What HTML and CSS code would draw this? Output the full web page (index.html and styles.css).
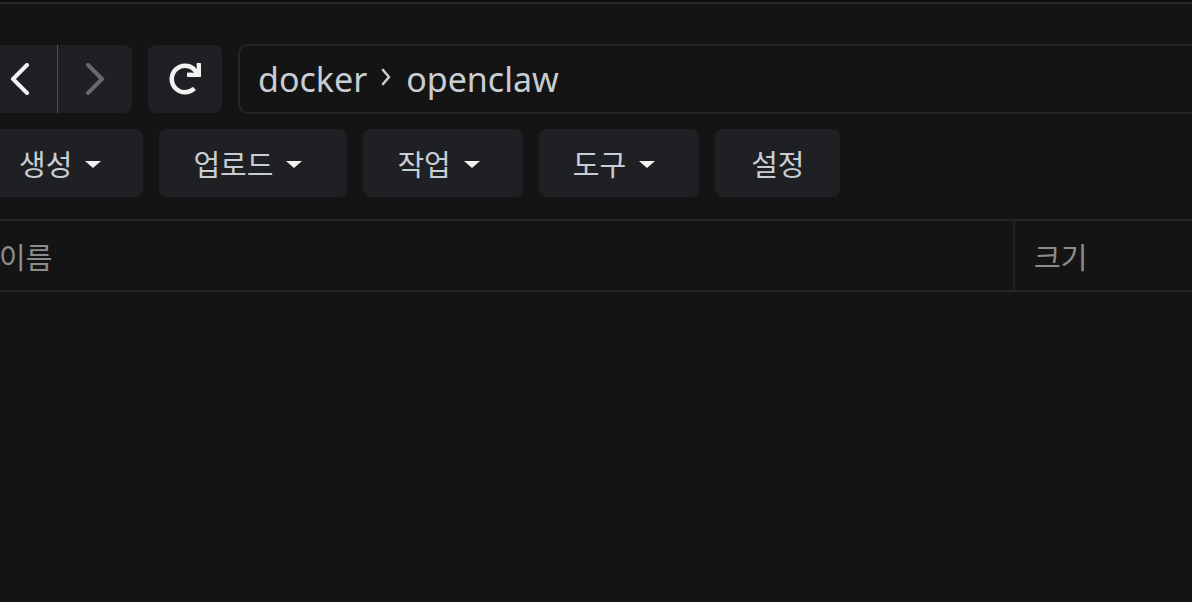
FILE: index.html
```html
<!DOCTYPE html>
<html lang="ko">
<head>
    <meta charset="UTF-8">
    <meta name="viewport" content="width=device-width, initial-scale=1.0">
    <title>파일 탐색기</title>
    <link rel="stylesheet" href="styles.css">
</head>
<body>
    <div class="top-strip"></div>

    <div class="app">
        <div class="nav-row">
            <div class="nav-group">
                <button class="nav-btn" title="뒤로">
                    <svg width="20" height="32" viewBox="0 0 20 32"><polyline points="17,2 3,16 17,30" fill="none" stroke="#f2f2f2" stroke-width="4" stroke-linecap="round" stroke-linejoin="round"/></svg>
                </button>
                <div class="nav-divider"></div>
                <button class="nav-btn" title="앞으로">
                    <svg width="20" height="32" viewBox="0 0 20 32"><polyline points="3,2 17,16 3,30" fill="none" stroke="#696969" stroke-width="4" stroke-linecap="round" stroke-linejoin="round"/></svg>
                </button>
            </div>
            <button class="refresh-btn" title="새로고침">
                <svg width="32" height="32" viewBox="0 0 512 512"><path fill="#f2f2f2" d="M500.33 0h-47.41a12 12 0 0 0-12 12.57l4 82.76A247.42 247.42 0 0 0 256 8C119.34 8 7.9 119.53 8 256.19 8.1 393.07 119.1 504 256 504a247.1 247.1 0 0 0 166.18-63.91 12 12 0 0 0 .48-17.43l-34-34a12 12 0 0 0-16.38-.55A176 176 0 1 1 402.1 157.8l-101.53-4.87a12 12 0 0 0-12.57 12v47.41a12 12 0 0 0 12 12h200.33a12 12 0 0 0 12-12V12a12 12 0 0 0-12-12z"/></svg>
            </button>
            <div class="path-box">
                <span class="crumb">docker</span>
                <svg class="crumb-sep" width="10" height="18" viewBox="0 0 10 18"><polyline points="2,2 8,9 2,16" fill="none" stroke="#c8ccd3" stroke-width="2.6" stroke-linecap="round" stroke-linejoin="round"/></svg>
                <span class="crumb">openclaw</span>
            </div>
        </div>

        <div class="tool-row">
            <button class="tool-btn first">생성 <span class="caret"></span></button>
            <button class="tool-btn">업로드 <span class="caret"></span></button>
            <button class="tool-btn tight">작업 <span class="caret"></span></button>
            <button class="tool-btn snug">도구 <span class="caret"></span></button>
            <button class="tool-btn plain">설정</button>
        </div>

        <div class="list-header">
            <div class="col-name">이름</div>
            <div class="col-size">크기</div>
        </div>
    </div>
</body>
</html>
```

FILE: styles.css
```css
body {
    margin: 0;
    padding: 0;
    background-color: #141414;
    height: 100vh;
    overflow: hidden;
    font-family: "Noto Sans", "Noto Sans CJK KR", sans-serif;
}

.top-strip {
    height: 2px;
    background: #0f0f0f;
    border-bottom: 2px solid #262626;
}

.app {
    margin-left: -17px;
}

.nav-row {
    display: flex;
    align-items: center;
    gap: 16px;
    margin-top: 40px;
    height: 70px;
}

.nav-group {
    display: flex;
    height: 68px;
    background: #1e2023;
    border-radius: 8px;
}

.nav-btn,
.refresh-btn,
.tool-btn {
    border: none;
    background: #1e2023;
    cursor: pointer;
    display: flex;
    align-items: center;
    justify-content: center;
    padding: 0;
}

.nav-btn {
    width: 74px;
    height: 68px;
    background: transparent;
}

.nav-divider {
    width: 1px;
    background: #505050;
}

.refresh-btn {
    width: 74px;
    height: 68px;
    border-radius: 8px;
}

.path-box {
    flex: 1;
    height: 66px;
    margin-right: -40px;
    border: 2px solid #262626;
    border-radius: 10px;
    display: flex;
    align-items: center;
    padding-left: 18px;
    color: #c8ccd3;
    font-size: 34px;
}

.crumb-sep {
    margin: 0 15px 4px 14px;
}

.tool-row {
    display: flex;
    gap: 16px;
    margin-top: 15px;
}

.tool-btn {
    height: 68px;
    padding: 0 45px 0 34px;
    border-radius: 8px;
    color: #c8ccd3;
    font-family: "Noto Sans CJK KR", sans-serif;
    font-size: 29px;
    gap: 13px;
}

.tool-btn.first {
    padding: 0 42px 0 36px;
}

.tool-btn.tight {
    padding-right: 43px;
}

.tool-btn.snug {
    padding-right: 44px;
}

.tool-btn.plain {
    padding: 0 35px 0 36px;
}

.caret {
    width: 0;
    height: 0;
    border-left: 8px solid transparent;
    border-right: 8px solid transparent;
    border-top: 7px solid #f2f2f2;
    margin-top: 2px;
}

.list-header {
    display: flex;
    margin-top: 22px;
    height: 69px;
    border-top: 2px solid #252525;
    border-bottom: 2px solid #252525;
    color: #8c8c8c;
    font-family: "Noto Sans CJK KR", sans-serif;
    font-size: 29px;
}

.col-name {
    width: 1032px;
    padding-left: 16px;
    box-sizing: border-box;
    display: flex;
    align-items: center;
    border-right: 2px solid #202020;
}

.col-size {
    flex: 1;
    padding-left: 19px;
    display: flex;
    align-items: center;
}
```
